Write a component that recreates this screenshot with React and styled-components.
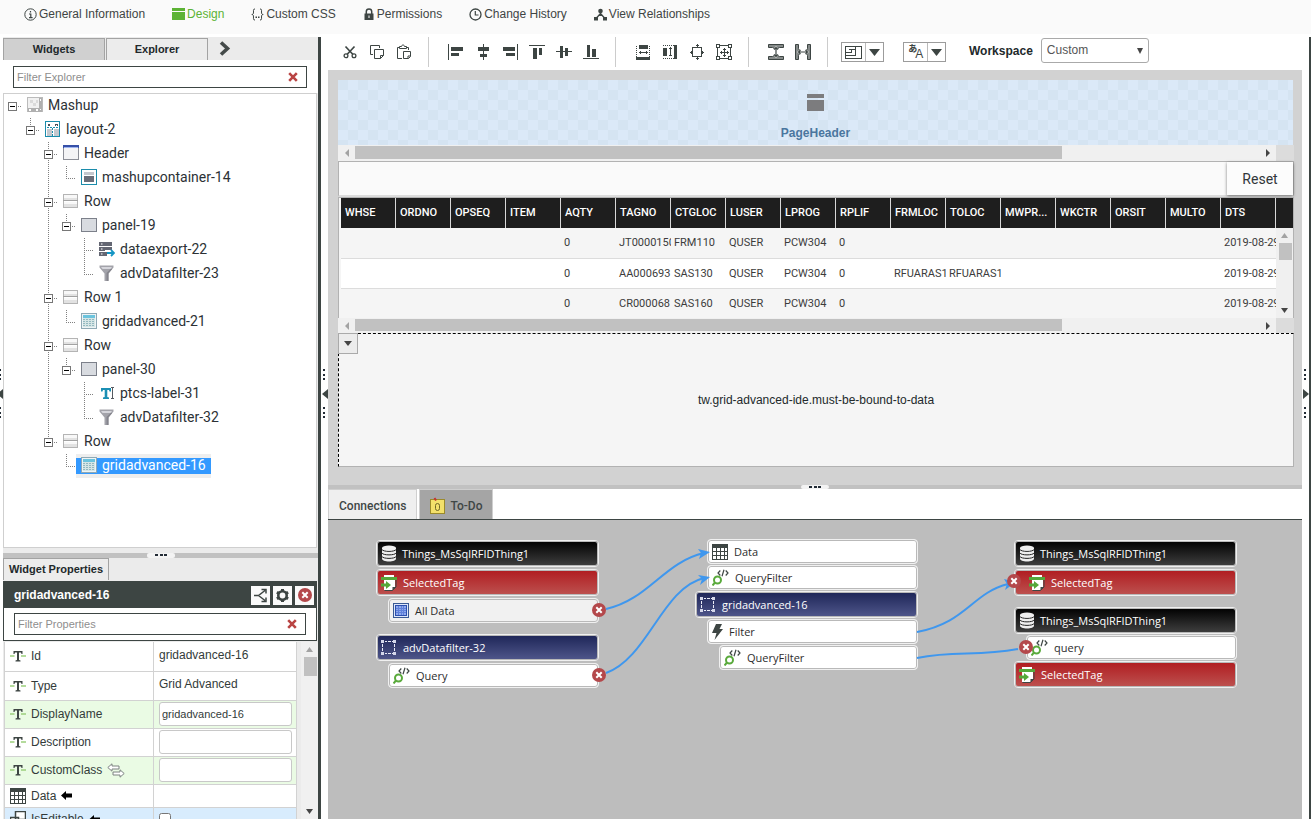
import React from "react";
import styled, { createGlobalStyle, css } from "styled-components";

const ink = "#3d4543";
const sans = '"Liberation Sans", Arial, sans-serif';
const roboto = 'Roboto, "Liberation Sans", sans-serif';
const open = '"Open Sans", "Noto Sans", sans-serif';

const GlobalStyle = createGlobalStyle`
  *, *::before, *::after { box-sizing: border-box; }
  body { margin: 0; background: #fff; color: #333b3a; font: 12px/16px ${sans}; }
  button, input, select { font: inherit; color: inherit; margin: 0; }
  button { padding: 0; border: 0; background: none; cursor: pointer; }
  svg { display: block; flex: none; }
`;

/* ---------- shell ---------- */

const Page = styled.div`
  display: flex;
  flex-direction: column;
  height: 100vh;
  min-height: 700px;
  padding-bottom: 3px;
  overflow: hidden;
`;

const Nav = styled.nav`
  display: flex;
  gap: 27px;
  height: 34px;
  flex: none;
  margin-bottom: 3px;
  padding: 0 24px 6px;
  align-items: center;
  background: #fafafa;
`;

const NavLink = styled.a`
  display: flex;
  align-items: center;
  gap: 2px;
  color: ${(p) => (p.$active ? "#5cb335" : "#3f4544")};
  text-decoration: none;
  white-space: nowrap;
`;

const Body = styled.div`
  display: flex;
  flex: 1;
  min-height: 0;
`;

const Gutter = styled.div`
  display: flex;
  flex: none;
  flex-direction: column;
  align-items: ${(p) => p.$align || "center"};
  width: ${(p) => p.$width}px;
  padding-top: 332px;
  overflow: hidden;
`;

const Bar = styled.div`
  flex: none;
  width: ${(p) => p.$width}px;
  background: ${ink};
`;

const Left = styled.aside`
  display: flex;
  flex-direction: column;
  flex: none;
  width: 315px;
  background: #ebebeb;
`;

const Main = styled.main`
  display: flex;
  flex-direction: column;
  flex: 1;
  min-width: 0;
`;

/* ---------- left panel ---------- */

const TabRow = styled.div`
  display: flex;
  flex: none;
  align-items: flex-end;
  gap: 1px;
  height: ${(p) => p.$height}px;
`;

const Tab = styled.button`
  width: ${(p) => p.$width}px;
  height: 22px;
  padding-bottom: 2px;
  border: 1px solid #a3a3a3;
  border-bottom: 0;
  background: ${(p) => (p.$shaded ? "#d0d0d0" : "#ececec")};
  color: #22292b;
  font-size: 11px;
  font-weight: bold;
  white-space: nowrap;
`;

const MoreTabs = styled.button`
  display: grid;
  place-items: center;
  width: 32px;
  height: 24px;
`;

const FilterRow = styled.label`
  display: flex;
  flex: none;
  padding: ${(p) => p.$pad};
  background: #fff;
`;

const FilterBox = styled.span`
  display: flex;
  align-items: center;
  flex: 1;
  height: 22px;
  padding: 0 8px 0 3px;
  border: 1px solid ${ink};
`;

const FilterInput = styled.input`
  flex: 1;
  min-width: 0;
  padding: 0;
  border: 0;
  outline: 0;
  background: none;
  font-size: 11px;
  &::placeholder { color: #8e8e8e; opacity: 1; }
`;

const Tree = styled.ul`
  flex: 1;
  min-height: 0;
  margin: 0 1px 5px 0;
  padding: 0;
  border: 1px solid #cfcfcf;
  background: #fff;
  list-style: none;
  overflow: hidden;
  font-family: ${roboto};
  font-size: 14px;
`;

const TreeRow = styled.li`
  display: flex;
  height: 24px;
`;

const Toggle = styled.button`
  width: 18px;
  height: 24px;
`;

const TreeLabel = styled.a`
  display: flex;
  align-items: center;
  gap: 5px;
  padding: 0 5px 2px;
  color: #2c3135;
  line-height: 22px;
  text-decoration: none;
  white-space: nowrap;
  ${(p) =>
    p.$selected &&
    css`
      color: #fff;
      background: linear-gradient(#eee 4px, #3399ff 4px, #3399ff 20px, #eee 20px);
    `}
`;

const Splitter = styled.div`
  display: flex;
  justify-content: center;
  align-items: center;
  flex: none;
  height: ${(p) => p.$height}px;
  background: #c1c1c1;
`;

const SplitGrip = styled.span`
  display: grid;
  place-items: center;
  width: 28px;
  height: 100%;
  border-radius: 2px;
  background: #f3f3f3;
`;

const Props = styled.section`
  display: flex;
  flex-direction: column;
  flex: none;
  height: 261px;
`;

const PropsHead = styled.div`
  flex: none;
  margin: 1px 1px 1px 0;
  border: 1px solid ${ink};
`;

const PropsTitle = styled.h2`
  display: flex;
  align-items: center;
  gap: 3px;
  height: 26px;
  margin: 0;
  padding: 0 2px 0 10px;
  background: ${ink};
  color: #fff;
  font-size: 12px;
`;

const PropsName = styled.span`
  flex: 1;
`;

const SquareButton = styled.button`
  display: grid;
  place-items: center;
  width: 19px;
  height: 19px;
  background: #fafafa;
`;

const PropsBody = styled.div`
  display: flex;
  flex: 1;
  gap: 4px;
  min-height: 0;
  padding-left: 1px;
  overflow: hidden;
`;

const PropTable = styled.table`
  flex: none;
  align-self: flex-start;
  width: 293px;
  border-collapse: collapse;
  table-layout: fixed;
`;

const PropRow = styled.tr`
  height: ${(p) => p.$height}px;
  background: ${(p) => p.$tint || "#fff"};
`;

const PropCell = styled.td`
  padding: 0 4px 0 5px;
  border: 1px solid #d2d2d2;
  border-width: 0 1px 1px;
  vertical-align: middle;
  text-align: left;
`;

const PropName = styled.span`
  display: flex;
  align-items: center;
  gap: 5px;
  font-weight: normal;
`;

const PropText = styled.span`
  display: block;
  padding-bottom: 3px;
`;

const PropInput = styled.input`
  display: block;
  width: 100%;
  height: 24px;
  padding: 0 2px;
  border: 1px solid #c8c8c8;
  border-radius: 3px;
  background: #fff;
  font-size: 11px;
`;

const PropCheck = styled.input`
  display: block;
  width: 12px;
  height: 12px;
`;

/* ---------- scroll bars ---------- */

const HTrack = styled.div`
  display: flex;
  align-items: stretch;
  flex: none;
  height: ${(p) => p.$height}px;
  padding-right: 18px;
  background: linear-gradient(#dcdcdc, #dcdcdc) right / 18px 100% no-repeat #f0f0f0;
`;

const ScrollButton = styled.button`
  display: grid;
  place-items: center;
  flex: none;
  width: 17px;
  height: 15px;
`;

const HThumb = styled.div`
  flex: 707;
  margin: 1px 0 2px;
  background: #c1c1c1;
`;

const HRest = styled.div`
  flex: 197;
`;

const VTrack = styled.div`
  display: flex;
  flex-direction: column;
  flex: ${(p) => p.$flex || "none"};
  width: 17px;
  background: #f0f0f0;
`;

const VThumb = styled.div`
  height: ${(p) => p.$height}px;
  margin: 0 1px 0 3px;
  background: #c1c1c1;
`;

const Spacer = styled.div`
  flex: 1;
`;

/* ---------- toolbar ---------- */

const Toolbar = styled.div`
  display: flex;
  align-items: center;
  flex: none;
  height: 33px;
  padding: 0 8px 3px;
`;

const ToolButton = styled.button`
  display: grid;
  place-items: center;
  flex: none;
  width: 27px;
  height: 28px;
`;

const Separator = styled.span`
  flex: none;
  width: 1px;
  height: 30px;
  margin: 0 13px 0 11px;
  background: #ccc;
`;

const SplitButton = styled.button`
  display: flex;
  align-items: center;
  flex: none;
  width: 43px;
  height: 20px;
  margin-right: 19px;
  border: 1px solid #9c9c9c;
`;

const SplitCell = styled.span`
  display: grid;
  place-items: center;
  flex: ${(p) => p.$grow};
  height: 100%;
  border-left: ${(p) => (p.$line ? "1px solid #bbb" : "0")};
`;

const WorkspaceLabel = styled.label`
  display: flex;
  align-items: center;
  gap: 8px;
  margin: 0 0 3px 4px;
  color: #22292b;
  font-weight: bold;
`;

const SelectWrap = styled.span`
  display: grid;
  align-items: center;
  width: 108px;
  height: 25px;
  & > * { grid-area: 1 / 1; }
  & > svg { justify-self: end; margin-right: 6px; pointer-events: none; }
`;

const Select = styled.select`
  width: 100%;
  height: 100%;
  padding: 0 5px 2px;
  border: 1px solid #aaa;
  border-radius: 3px;
  appearance: none;
  background: #fff;
  color: #555;
  font-weight: normal;
`;

/* ---------- design canvas ---------- */

const Canvas = styled.section`
  display: flex;
  flex-direction: column;
  flex: 1;
  min-height: 0;
  padding: 10px 8px 18px 10px;
  background: #d2d2d2;
`;

const HeaderWidget = styled.div`
  display: flex;
  flex-direction: column;
  align-items: center;
  flex: none;
  height: 65px;
  margin-right: 1px;
  padding-top: 14px;
  gap: 14px;
  background: conic-gradient(#dbe9f8 25%, #d5e4f2 0 50%, #dbe9f8 0 75%, #d5e4f2 0) 0 0 / 20px 20px;
  color: #4a769f;
  font-weight: bold;
`;

const ResetPanel = styled.div`
  display: flex;
  justify-content: flex-end;
  flex: none;
  height: 36px;
  border: 1px solid #b2b2b2;
  border-width: 1px 1px 2px 1px;
  border-bottom-color: #dcdcdc;
  background: #fafafa;
`;

const ResetButton = styled.button`
  width: 66px;
  height: 33px;
  background: #fcfcfc;
  box-shadow: 0 1px 3px rgba(0, 0, 0, 0.5);
  color: #32373a;
  font-family: ${roboto};
  font-size: 14px;
`;

const GridWidget = styled.div`
  display: flex;
  flex: none;
  height: 121px;
  border: 1px solid #b2b2b2;
  border-width: 1px 1px 0;
  padding-left: 2px;
  background: #f5f5f5;
  overflow: hidden;
`;

const DataTable = styled.table`
  flex: 1;
  width: 100%;
  min-width: 0;
  align-self: flex-start;
  border-collapse: separate;
  border-spacing: 0;
  table-layout: fixed;
  font-family: ${roboto};
  font-size: 11px;
`;

const HeadCell = styled.th`
  height: 30px;
  padding: 0 0 0 4px;
  border-right: 1px solid #d8d8d8;
  background: #1e1e1e;
  color: #fff;
  font-weight: 500;
  text-align: left;
  white-space: nowrap;
  overflow: hidden;
`;

const DataRow = styled.tr`
  background: ${(p) => (p.$even ? "#fff" : "#f5f5f5")};
  &:first-child td { height: 31px; }
`;

const DataCell = styled.td`
  height: 30px;
  padding: 0 0 0 3px;
  border-bottom: 1px solid #dcdcdc;
  color: #3c3c3c;
  white-space: nowrap;
  overflow: hidden;
`;

const GridSide = styled.div`
  display: flex;
  flex-direction: column;
  flex: none;
  width: 17px;
`;

const GridSideHead = styled.div`
  height: 30px;
  background: #1e1e1e;
`;

const BoundNotice = styled.div`
  position: relative;
  display: flex;
  align-items: center;
  justify-content: center;
  flex: 1;
  min-height: 60px;
  border: 1px dashed #000;
  border-right: 1px solid #b2b2b2;
  border-bottom: 1px solid #b2b2b2;
  background: #f5f5f5;
  color: #22292b;
`;

const WidgetMenu = styled.button`
  position: absolute;
  top: -1px;
  left: -1px;
  display: grid;
  place-items: center;
  width: 20px;
  height: 21px;
  border: 1px solid #aaa;
  background: #ececec;
`;

/* ---------- connections ---------- */

const BottomTabs = styled.div`
  display: flex;
  flex: none;
  gap: 2px;
  height: 31px;
  border-bottom: 1px solid ${ink};
`;

const BottomTab = styled.button`
  display: flex;
  align-items: center;
  gap: 4px;
  padding: 2px 10px 0;
  border: 1px solid #cfcfcf;
  border-bottom: 0;
  background: ${(p) => (p.$shaded ? "#a5a5a5" : "#efefef")};
  color: #3f4746;
  font-family: ${roboto};
  font-weight: 500;
`;

const Diagram = styled.section`
  position: relative;
  flex: none;
  height: 299px;
  background: #bdbdbd;
  overflow: hidden;
`;

const Wires = styled.svg`
  position: absolute;
  top: 0;
  left: 0;
`;

const Stack = styled.div`
  position: absolute;
  top: ${(p) => p.$top}px;
  left: ${(p) => p.$left}px;
  display: flex;
  flex-direction: column;
  gap: ${(p) => p.$gap || 2}px;
  width: 223px;
`;

const fills = {
  thing: "linear-gradient(#000, #404040)",
  event: "linear-gradient(#b01c20, #bd5250)",
  widget: "linear-gradient(#1d2557, #50578b)",
  plain: "#fff",
  muted: "#f1f1f1",
};

const Node = styled.div`
  position: relative;
  display: flex;
  align-items: center;
  gap: ${(p) => (p.$kind === "thing" ? 5 : 6)}px;
  height: ${(p) => (p.$kind === "plain" || p.$kind === "muted" ? 25 : 27)}px;
  margin-left: ${(p) => (p.$indent || 0) * 12}px;
  padding-left: ${(p) => (p.$pad ? 14 : 4)}px;
  border: 1px solid #f0f0f0;
  border-radius: 4px;
  background: ${(p) => fills[p.$kind]};
  box-shadow: inset 0 0 0 1px #b9b9b9;
  color: ${(p) => (p.$kind === "plain" || p.$kind === "muted" ? "#2d2d2d" : "#fff")};
  font-family: ${open};
  font-size: 11px;
  white-space: nowrap;
`;

const Unlink = styled.button`
  position: absolute;
  top: 4px;
  ${(p) => (p.$side === "left" ? "left: -8px;" : "right: -8px;")}
  width: 14px;
  height: 14px;
`;

/* ---------- icons ---------- */

const Svg = ({ w = 16, h = 16, crisp, children, ...rest }) => (
  <svg
    width={w}
    height={h}
    viewBox={`0 0 ${w} ${h}`}
    fill="none"
    shapeRendering={crisp ? "crispEdges" : "auto"}
    aria-hidden="true"
    {...rest}
  >
    {children}
  </svg>
);

const Tri = ({ dir, w = 7, h = 5, color = "#454545" }) => {
  const d = {
    down: `M0 0H${w}L${w / 2} ${h}Z`,
    up: `M0 ${h}H${w}L${w / 2} 0Z`,
    left: `M${w} 0V${h}L0 ${h / 2}Z`,
    right: `M0 0V${h}L${w} ${h / 2}Z`,
  }[dir];
  return (
    <Svg w={w} h={h}>
      <path d={d} fill={color} />
    </Svg>
  );
};

const InfoIcon = () => (
  <Svg w={13} h={13}>
    <circle cx="6.5" cy="6.5" r="5.7" stroke={ink} />
    <path d="M6.5 3v1.5M5 6h1.8v3.5M5 9.7h3.6" stroke={ink} strokeWidth="1.2" />
  </Svg>
);
const DesignIcon = () => (
  <Svg w={13} h={12} crisp>
    <path d="M0 0h13v3H0zM0 4h13v8H0z" fill="#5cb335" />
  </Svg>
);
const BracesIcon = () => (
  <Svg w={13} h={13}>
    <path d="M4 1C2 1 2.500 2 2.500 4S2 6.500.8 6.500C2 6.500 2.500 7 2.500 9S2 12 4 12M9 1c2 0 1.500 1 1.500 3s.5 2.500 1.700 2.500c-1.200 0-1.700.5-1.700 2.500s.5 3-1.500 3" stroke={ink} />
    <path d="M4.500 8.500h1.500V10H4.500zM7 8.500h1.500V10H7z" fill={ink} />
  </Svg>
);
const LockIcon = () => (
  <Svg w={12} h={12}>
    <path d="M3.300 6V3.600a2.700 2.700 0 0 1 5.400 0V6" stroke={ink} strokeWidth="1.500" />
    <path d="M1.500 5.500h9V12h-9z" fill={ink} />
    <path d="M5.500 7.500h1v2.500h-1z" fill="#fff" />
  </Svg>
);
const ClockIcon = () => (
  <Svg w={13} h={13}>
    <circle cx="6.500" cy="6.500" r="5.500" stroke={ink} strokeWidth="1.300" />
    <path d="M6.300 3v4H9.500" stroke={ink} strokeWidth="1.200" />
  </Svg>
);
const RelationsIcon = () => (
  <Svg w={13} h={13}>
    <path d="M6.500 4v4M6.500 5.500 2.500 10M6.500 5.500l4 4.500" stroke={ink} strokeWidth="1.300" />
    <path d="M0 9h4v3.500H0zM9 9h4v3.500H9z" fill={ink} />
    <circle cx="6.500" cy="3" r="2.300" fill={ink} />
  </Svg>
);
const ChevronIcon = () => (
  <Svg w={12} h={15}>
    <path d="m2 1.500 6.500 6L2 13.500" stroke="#454b4a" strokeWidth="3.600" />
  </Svg>
);
const ClearIcon = () => (
  <Svg w={10} h={10}>
    <path d="m1.200 1.200 7.600 7.600M8.800 1.200 1.200 8.800" stroke="#b94443" strokeWidth="2.600" />
  </Svg>
);
const Dots = ({ vertical }) => (
  <Svg w={vertical ? 3 : 12} h={vertical ? 12 : 3} crisp>
    {[0, 5, 9].map((n) => (
      <rect key={n} x={vertical ? 0 : n} y={vertical ? n : 0} width={vertical ? 2 : 3} height="2" fill="#222b35" />
    ))}
  </Svg>
);

const GripStack = styled.div`
  display: flex;
  flex-direction: column;
  align-items: center;
  gap: 8px;
`;
const Grip = ({ dir }) => (
  <GripStack>
    <Dots vertical />
    <Tri dir={dir} w={6} h={10} color={ink} />
    <Dots vertical />
  </GripStack>
);

/* tree icons */
const treeIcons = {
  mashup: (
    <Svg crisp>
      <rect x=".5" y=".5" width="15" height="14" fill="#f1f1f1" stroke="#bbb" />
      <path d="M1 11h14v4H1zM12 1h3v13h-3z" fill="#b0b0b0" />
      <path d="M3 3h3v3H3zM6 6h3v3H6zM9 3h2v3H9z" fill="#dadada" />
      <path d="M2 12h2v2H2zM9 12h2v2H9zM13 2h1v2h-1zM13 12h1v1h-1z" fill="#fff" />
    </Svg>
  ),
  layout: (
    <Svg crisp>
      <rect x=".5" y=".5" width="14" height="15" fill="#fff" stroke="#1b8cab" />
      <path d="M2 8h5v7H2zM9 8h5v7H9z" fill="#c5c8ce" />
      <path d="M2 6.500h12" stroke="#1b8cab" strokeDasharray="2 1" />
      <path d="M7.500 7v8" stroke="#1b8cab" strokeDasharray="2 1" />
      <path d="M3 5V3h2M10 3h2v2M4 4l1 1M11 4l-1 1" stroke="#4b5058" />
    </Svg>
  ),
  header: (
    <Svg crisp>
      <rect x=".5" y=".5" width="15" height="14" fill="#f4f4f6" stroke="#8d8f98" />
      <path d="M0 0h16v3H0z" fill="#3650a8" />
      <path d="M1 2h14v1H1z" fill="#9fb5f0" />
    </Svg>
  ),
  container: (
    <Svg crisp>
      <rect x=".5" y=".5" width="15" height="15" fill="#fff" stroke="#1b8cab" />
      <path d="M3 3h10v3H3z" fill="#c5c8ce" />
      <path d="M3 7h10v6H3z" fill="#6b6e79" />
    </Svg>
  ),
  row: (
    <Svg crisp>
      <path d="M0 1h15v14H0z" fill="#b4b4b4" />
      <path d="M1 2h13v3H1zM1 9h13v2H1z" fill="#f8f8f8" />
      <path d="M1 5h13v2H1zM1 11h13v3H1z" fill="#e2e2e2" />
      <path d="M0 7h15v1H0z" fill="#a2a2a2" />
      <path d="M1 8h13v1H1z" fill="#fff" />
    </Svg>
  ),
  panel: (
    <Svg crisp>
      <rect x=".5" y="1.500" width="15" height="13" fill="#d8dbe0" stroke="#7c808a" />
    </Svg>
  ),
  dataexport: (
    <Svg>
      <path d="M0 1h13v4H0zM0 6h13v3H6v1H0zM0 11h8v4H0z" fill="#646773" />
      <path d="M2 2.500h1.500v1H2zM2 7.500h1.500v1H2zM2 12.500h1.500v1H2z" fill="#fff" />
      <path d="M8 12h7M12 9l3 3-3 3" stroke="#1495c4" strokeWidth="1.800" />
    </Svg>
  ),
  funnel: (
    <Svg>
      <path d="M.5.500h14V2.500L9.500 8.500V16h-4V8.500L.5 2.500Z" fill="#a3a3aa" />
      <path d="M2 2h11L11.500 4h-8Z" fill="#d6d6dc" />
      <path d="M9.500 8.500V16H7.500V8l4-4h1.700z" fill="#85858d" />
    </Svg>
  ),
  grid: (
    <Svg crisp>
      <rect x=".5" y=".5" width="15" height="15" fill="#eef4f6" stroke="#8fa9b5" />
      <path d="M2 2h12v3H2z" fill="#6cc4de" />
      <path d="M2 5h12v9H2z" fill="#d6e6e6" />
      <path d="M2 6.500h12M2 8.500h12M2 10.500h12M2 12.500h12" stroke="#93b8c0" strokeDasharray="2 1" />
    </Svg>
  ),
  label: (
    <Svg>
      <path d="M2 3h10v3.500h-1.500L10 5H8.300v7l1.700.5V14H4v-1.500l1.700-.5V5H4l-.5 1.500H2Z" fill="#1b8fb4" />
      <path d="M12 2.500h3M13.500 3v10M12 13.500h3" stroke="#555a60" />
    </Svg>
  ),
};

/* property icons */
const StringIcon = () => (
  <Svg w={16} h={14}>
    <path d="M0 7h4.500M11 7h5" stroke="#9ccf7c" strokeWidth="1.500" />
    <path d="M3.500 2h9v3h-1L11 3.500H9V11l1.500.5v1h-5v-1L7 11V3.500H5L4.500 5h-1Z" fill={ink} />
  </Svg>
);
const TableIcon = () => (
  <Svg crisp>
    <rect x=".5" y=".5" width="15" height="15" fill="#fff" stroke={ink} />
    <path d="M0 0h16v4H0z" fill={ink} />
    <path d="M0 7.500h16M0 11.500h16M4.500 4v12M8.500 4v12M12.500 4v12" stroke={ink} />
  </Svg>
);
const BoolIcon = () => (
  <Svg>
    <path d="M5.500.5h10v8h-10zM.5 6.500h8v8h-8z" fill="#fff" stroke={ink} strokeWidth="1.500" />
  </Svg>
);
const SwapIcon = () => (
  <Svg w={18} h={15}>
    <path d="M.8 4.500 5 .8V3h7v3H5v2.200ZM17.200 10.500 13 6.800V9H6v3h7v2.200Z" fill="#fff" stroke="#7c8280" />
  </Svg>
);
const BackIcon = () => (
  <Svg w={12} h={9}>
    <path d="M0 4.500 5 0v2.500h6v4H5V9Z" fill="#000" />
  </Svg>
);
const BranchIcon = () => (
  <Svg w={15} h={15}>
    <path d="M1 7.500h4.500L12 2.500M5.500 7.500 12 12.500M8.500 1.500H13v4M8.500 13.500H13v-4" stroke={ink} strokeWidth="1.500" />
  </Svg>
);
const GearIcon = () => (
  <Svg w={15} h={15}>
    <circle cx="7.500" cy="7.500" r="4.200" stroke={ink} strokeWidth="2.600" />
    <path d="M7.500 1v2M7.500 12v2M1.900 4.200l1.700 1M11.400 9.800l1.700 1M1.900 10.800l1.700-1M11.400 5.200l1.700-1" stroke={ink} strokeWidth="3" />
  </Svg>
);
const CloseIcon = () => (
  <Svg w={14} h={14}>
    <circle cx="7" cy="7" r="7" fill="#b4484b" />
    <path d="m4.300 4.300 5.400 5.400M9.700 4.300 4.300 9.700" stroke="#fff" strokeWidth="2" />
  </Svg>
);

/* toolbar icons */
const F = ({ d }) => <path d={d} fill={ink} />;
const L = ({ d, ...r }) => <path d={d} stroke={ink} {...r} />;
const tools = [
  [
    ["Cut", <Svg key="i" w={14} h={14}><L d="M2.500 1.500 10 9.500M11.500 1.500 4 9.500" strokeWidth="1.700" /><circle cx="3" cy="10.800" r="1.900" stroke={ink} strokeWidth="1.300" /><circle cx="11" cy="10.800" r="1.900" stroke={ink} strokeWidth="1.300" /></Svg>],
    ["Copy", <Svg key="i"><L d="M4 10.500H1.500v-9h9V4" /><L d="M5.500 5.500h9v6l-3 3h-6Z" /><L d="M11.500 14.500v-3h3" /></Svg>],
    ["Paste", <Svg key="i"><L d="M6 14.500H1.500v-11h2M10.500 3.500h2V6" /><L d="M3.500 4.500h7v-2h-2c0-2-3-2-3 0h-2Z" /><L d="M7.500 7.500h7v5l-2 2h-5Z" /><L d="M12 14.500v-2.500h2.500" /></Svg>],
  ],
  [
    ["Align left", <Svg key="i" crisp><F d="M0 0h1v16H0zM3 3h12v4H3zM3 9h8v3H3z" /></Svg>],
    ["Align center", <Svg key="i" crisp><F d="M8 0h1v16H8zM3 3h11v4H3zM5 10h7v3H5z" /></Svg>],
    ["Align right", <Svg key="i" crisp><F d="M15 0h1v16h-1zM1 3h12v4H1zM4 9h9v3H4z" /></Svg>],
    ["Align top", <Svg key="i" crisp><F d="M0 1h16v1H0zM4 4h4v11H4zM10 4h3v7h-3z" /></Svg>],
    ["Align middle", <Svg key="i" crisp><F d="M0 7h16v1H0zM4 2h3v12H4zM9 4h3v8H9z" /></Svg>],
    ["Align bottom", <Svg key="i" crisp><F d="M0 14h16v1H0zM4 1h3v12H4zM9 5h4v8H9z" /></Svg>],
  ],
  [
    ["Same width", <Svg key="i" crisp><F d="M4 1h9v4H4zM1 13h14v3H1z" /><L d="M1.500 2v11M14.500 2v11" strokeDasharray="1 1" /><L d="M4 8.500h9M5.500 7v3M11.500 7v3" /></Svg>],
    ["Same height", <Svg key="i" crisp><F d="M1 4h4v8H1zM12 1h3v14h-3z" /><L d="M1 1.500h11M1 14.500h11" strokeDasharray="1 1" /><L d="M8.500 3v9M7 4.500h3M7 11.500h3" /></Svg>],
    ["Fit", <Svg key="i" crisp><L d="M3.500 3.500h9v9h-9z" /><L d="M8.500 0v4M8.500 12v4M1 8.500h3M12 8.500h3M7 1.500h3M7 14.500h3M2.500 7v3M13.500 7v3" /></Svg>],
    ["Expand", <Svg key="i" crisp><L d="M1.500 1.500h13v13h-13z" strokeWidth="1" /><F d="M0 0h4v4H0zM12 0h4v4h-4zM0 12h4v4H0zM12 12h4v4h-4z" /><path d="M1 1h2v2H1zM13 1h2v2h-2zM1 13h2v2H1zM13 13h2v2h-2z" fill="#fff" /><L d="M8.500 4v9M4 8.500h9M7 5.500h3M7 11.500h3M5.500 7v3M11.500 7v3" /></Svg>],
  ],
  [
    ["Space vertically", <Svg key="i"><path d="M.5.500h15v3h-4l-3.500 2-3.500-2h-4zM.5 15.500h15v-3h-4l-3.500-2-3.500 2h-4z" fill="#858a89" stroke={ink} /><path d="M5 6 8 2l3 4ZM5 10l3 4 3-4Z" fill="#fff" /><L d="M8 3v10M6 5.500l2-2 2 2M6 10.500l2 2 2-2" strokeWidth="1.200" /></Svg>],
    ["Space horizontally", <Svg key="i"><path d="M.5.500v15h3v-4l2-3.500-2-3.500v-4zM15.500.500v15h-3v-4l-2-3.500 2-3.500v-4z" fill="#858a89" stroke={ink} /><path d="M6 5 2 8l4 3ZM10 5l4 3-4 3Z" fill="#fff" /><L d="M3 8h10M5.500 6l-2 2 2 2M10.500 6l2 2-2 2" strokeWidth="1.200" /></Svg>],
  ],
];

const LayoutIcon = () => (
  <Svg w={17} h={13} crisp>
    <L d="M.5.500h16v12H.5zM4 3.500h6v6H.5M.5 6.500h6v-3M10.500.500v9" />
  </Svg>
);
const Translate = styled.span`
  display: flex;
  align-items: flex-start;
  height: 16px;
  color: ${ink};
  font: bold 9px/10px "Noto Sans CJK JP", ${sans};
`;
const TranslateA = styled.span`
  margin-left: -2px;
  padding-top: 4px;
  font: 12px/12px ${sans};
`;

const HeaderIcon = () => (
  <Svg w={17} h={17} crisp>
    <path d="M0 0h17v4H0zM0 6h17v11H0z" fill="#7c7c7e" />
  </Svg>
);
const NoteIcon = () => (
  <Svg w={16} h={18}>
    <rect x=".5" y="2.500" width="14" height="14" fill="#f3e06b" stroke="#9b8a2a" />
    <rect x="5.500" y="6.500" width="4" height="7" rx="2" stroke="#6f6626" />
    <path d="m4.500 1 1.500 2.500" stroke="#c43131" strokeWidth="2" />
  </Svg>
);

/* node icons */
const nodeIcons = {
  db: (
    <Svg w={16} h={17}>
      <path d="M1 3v10.500C1 15.500 4 16.500 8 16.500s7-1 7-3V3Z" fill="#eee" />
      <path d="M1 4.500c1 2.500 13 2.500 14 0M1 8c1 2.500 13 2.500 14 0M1 11.500c1 2.500 13 2.500 14 0" stroke="#222" />
      <ellipse cx="8" cy="3" rx="7" ry="2.500" fill="#eee" />
    </Svg>
  ),
  event: (
    <Svg>
      <path d="M3 0h10v2H3zM3 5h11v7l-3 3H3z" fill="#fff" />
      <path d="M15 5v7l-3.500 3.500H3.500" stroke={ink} />
      <path d="M11.500 15v-3H15Z" fill={ink} />
      <path d="M0 2h16v3H0z" fill="#55a83a" />
      <path d="M0 8.500h5V6l5 4-5 4v-2.500H0z" fill="#55a83a" />
    </Svg>
  ),
  all: (
    <Svg crisp>
      <rect x=".5" y=".5" width="15" height="14" fill="#dfe8fa" stroke="#3a5a94" />
      <rect x="2.500" y="2.500" width="11" height="10" fill="#8fa9ec" stroke="#2b4fae" />
      <path d="M3 5.500h10M3 7.500h10M3 9.500h10M5.500 3v9M8.500 3v9M10.500 3v9" stroke="#4167cf" strokeWidth="1" opacity=".6" />
    </Svg>
  ),
  widget: (
    <Svg w={16} h={15} crisp>
      <path d="M4 1.500h2M7 1.500h3M11 1.500h1M4 13.500h2M7 13.500h3M11 13.500h1M1.500 4v3M1.500 8v3M13.500 4v3M13.500 8v3" stroke="#e9ebf6" />
      <path d="M0 0h3v3H0zM12 0h3v3h-3zM0 12h3v3H0zM12 12h3v3h-3z" fill="#d4d7ea" />
    </Svg>
  ),
  query: (
    <Svg w={17} h={17}>
      <circle cx="5.500" cy="11" r="3.500" stroke="#5aaa3c" strokeWidth="2" />
      <path d="M3 13.500.5 16.500" stroke="#5aaa3c" strokeWidth="2" />
      <path d="M8.300 1.500 6 4l2.300 2.500M13.700 1.500 16 4l-2.300 2.500M12 .8 10 7.200" stroke={ink} strokeWidth="1.200" />
    </Svg>
  ),
  table: <TableIcon />,
  bolt: (
    <Svg w={11} h={16}>
      <path d="M4 0h6L7.500 5H11L2.500 16 4.500 9H0Z" fill={ink} />
    </Svg>
  ),
};

/* ---------- data ---------- */

const navItems = [
  ["General Information", <InfoIcon key="i" />],
  ["Design", <DesignIcon key="i" />, true],
  ["Custom CSS", <BracesIcon key="i" />],
  ["Permissions", <LockIcon key="i" />],
  ["Change History", <ClockIcon key="i" />],
  ["View Relationships", <RelationsIcon key="i" />],
];

/* guides: one letter per level. space = empty, | = line, + = open node, r = root node, e = last open node, t = branch, l = last leaf */
const treeItems = [
  ["r", "mashup", "Mashup"],
  [" e", "layout", "layout-2"],
  ["  +", "header", "Header"],
  ["  |l", "container", "mashupcontainer-14"],
  ["  +", "row", "Row"],
  ["  |e", "panel", "panel-19"],
  ["  | t", "dataexport", "dataexport-22"],
  ["  | l", "funnel", "advDatafilter-23"],
  ["  +", "row", "Row 1"],
  ["  |l", "grid", "gridadvanced-21"],
  ["  +", "row", "Row"],
  ["  |e", "panel", "panel-30"],
  ["  | t", "label", "ptcs-label-31"],
  ["  | l", "funnel", "advDatafilter-32"],
  ["  e", "row", "Row"],
  ["   l", "grid", "gridadvanced-16", true],
];

const columns = ["WHSE", "ORDNO", "OPSEQ", "ITEM", "AQTY", "TAGNO", "CTGLOC", "LUSER", "LPROG", "RPLIF", "FRMLOC", "TOLOC", "MWPR...", "WKCTR", "ORSIT", "MULTO", "DTS"];
const rows = [
  { AQTY: "0", TAGNO: "JT0000150", CTGLOC: "FRM110", LUSER: "QUSER", LPROG: "PCW304", RPLIF: "0", DTS: "2019-08-29" },
  { AQTY: "0", TAGNO: "AA000693", CTGLOC: "SAS130", LUSER: "QUSER", LPROG: "PCW304", RPLIF: "0", FRMLOC: "RFUARAS1", TOLOC: "RFUARAS1", DTS: "2019-08-29" },
  { AQTY: "0", TAGNO: "CR000068", CTGLOC: "SAS160", LUSER: "QUSER", LPROG: "PCW304", RPLIF: "0", DTS: "2019-08-29" },
];

/* ---------- parts ---------- */

const Guide = ({ kind, label }) => {
  const up = "|+etl".includes(kind);
  const down = "|+t".includes(kind);
  const across = "r+etl".includes(kind);
  const box = "r+e".includes(kind);
  const drawing = (
    <Svg w={18} h={24} crisp>
      {up && <path d="M8.500 0V12" stroke="#808080" strokeDasharray="1 1" />}
      {down && <path d="M8.500 12V24" stroke="#808080" strokeDasharray="1 1" />}
      {across && <path d="M8 12.500H18" stroke="#808080" strokeDasharray="1 1" />}
      {box && <rect x="4.500" y="8.500" width="8" height="8" fill="#fff" stroke="#777" />}
      {box && <path d="M6 12.500h5" stroke="#000" />}
    </Svg>
  );
  return box ? <Toggle aria-label={`Collapse ${label}`}>{drawing}</Toggle> : drawing;
};

const HScroll = ({ height }) => (
  <HTrack $height={height}>
    <ScrollButton aria-label="Scroll left"><Tri dir="left" w={4} h={8} color="#a3a3a3" /></ScrollButton>
    <HThumb />
    <HRest />
    <ScrollButton aria-label="Scroll right"><Tri dir="right" w={4} h={8} /></ScrollButton>
  </HTrack>
);

const Prop = ({ name, height, tint, icon, extra, children }) => (
  <PropRow $height={height} $tint={tint}>
    <PropCell as="th" scope="row">
      <PropName>{icon || <StringIcon />}{name}{extra}</PropName>
    </PropCell>
    <PropCell>{children}</PropCell>
  </PropRow>
);

const ThingNode = () => <Node $kind="thing">{nodeIcons.db}Things_MsSqlRFIDThing1</Node>;

const Cut = ({ side }) => (
  <Unlink $side={side} aria-label="Remove connection"><CloseIcon /></Unlink>
);

const Connections = () => (
  <Diagram>
    <Stack $left={48} $top={20}>
      <ThingNode />
      <Node $kind="event">{nodeIcons.event}SelectedTag</Node>
      <Node $kind="muted" $indent={1}>{nodeIcons.all}All Data<Cut /></Node>
    </Stack>
    <Stack $left={48} $top={114}>
      <Node $kind="widget">{nodeIcons.widget}advDatafilter-32</Node>
      <Node $kind="plain" $indent={1}>{nodeIcons.query}Query<Cut /></Node>
    </Stack>
    <Stack $left={367} $top={19} $gap={1}>
      <Node $kind="plain" $indent={1}>{nodeIcons.table}Data</Node>
      <Node $kind="plain" $indent={1}>{nodeIcons.query}QueryFilter</Node>
      <Node $kind="widget">{nodeIcons.widget}gridadvanced-16</Node>
      <Node $kind="plain" $indent={1}>{nodeIcons.bolt}Filter</Node>
      <Node $kind="plain" $indent={2}>{nodeIcons.query}QueryFilter</Node>
    </Stack>
    <Wires width="974" height="299" viewBox="0 0 974 299" fill="none" aria-hidden="true">
      <g stroke="#3f97ee" strokeWidth="2">
        <path d="M278 89C320 80 336 42 376 33" />
        <path d="M278 153C320 138 334 68 376 58" />
        <path d="M589 112C638 103 644 73 680 64" />
        <path d="M589 138C628 130 648 137 690 129" />
      </g>
      <g fill="#3f97ee">
        <path d="m382 32-12-3 3 4-2 6Z" />
        <path d="m382 57-12-2 4 4-2 6Z" />
        <path d="m688 62-12-3 3 5-2 6Z" />
      </g>
    </Wires>
    <Stack $left={686} $top={20}>
      <ThingNode />
      <Node $kind="event" $pad>{nodeIcons.event}SelectedTag<Cut side="left" /></Node>
    </Stack>
    <Stack $left={686} $top={87} $gap={1}>
      <ThingNode />
      <Node $kind="plain" $indent={1}>{nodeIcons.query}query<Cut side="left" /></Node>
      <Node $kind="event">{nodeIcons.event}SelectedTag</Node>
    </Stack>
  </Diagram>
);

const green = "#eafbe4";

export default function App() {
  return (
    <Page>
      <GlobalStyle />
      <Nav>
        {navItems.map(([text, icon, active]) => (
          <NavLink key={text} href="#" $active={active}>{icon}{text}</NavLink>
        ))}
      </Nav>
      <Body>
        <Gutter $width={3} $align="flex-end"><Grip dir="left" /></Gutter>
        <Left>
          <TabRow $height={23}>
            <Tab $width={102} $shaded>Widgets</Tab>
            <Tab $width={102}>Explorer</Tab>
            <MoreTabs aria-label="More tabs"><ChevronIcon /></MoreTabs>
          </TabRow>
          <FilterRow $pad="6px 11px 5px 10px">
            <FilterBox>
              <FilterInput placeholder="Filter Explorer" aria-label="Filter Explorer" />
              <button aria-label="Clear filter"><ClearIcon /></button>
            </FilterBox>
          </FilterRow>
          <Tree>
            {treeItems.map(([guides, icon, text, selected], i) => (
              <TreeRow key={i}>
                {[...guides].map((g, n) => <Guide key={n} kind={g} label={text} />)}
                <TreeLabel href="#" $selected={selected}>{treeIcons[icon]}{text}</TreeLabel>
              </TreeRow>
            ))}
          </Tree>
          <Splitter $height={5}><SplitGrip><Dots /></SplitGrip></Splitter>
          <Props>
            <TabRow $height={22}><Tab $width={106}>Widget Properties</Tab></TabRow>
            <PropsHead>
              <PropsTitle>
                <PropsName>gridadvanced-16</PropsName>
                <SquareButton aria-label="Bindings"><BranchIcon /></SquareButton>
                <SquareButton aria-label="Configure"><GearIcon /></SquareButton>
                <SquareButton aria-label="Delete widget"><CloseIcon /></SquareButton>
              </PropsTitle>
              <FilterRow $pad="5px 10px 5px 10px">
                <FilterBox>
                  <FilterInput placeholder="Filter Properties" aria-label="Filter Properties" />
                  <button aria-label="Clear filter"><ClearIcon /></button>
                </FilterBox>
              </FilterRow>
            </PropsHead>
            <PropsBody>
              <PropTable>
                <colgroup><col width="149" /><col /></colgroup>
                <tbody>
                  <Prop name="Id" height={29}><PropText>gridadvanced-16</PropText></Prop>
                  <Prop name="Type" height={29}><PropText>Grid Advanced</PropText></Prop>
                  <Prop name="DisplayName" height={28} tint={green}><PropInput aria-label="DisplayName" defaultValue="gridadvanced-16" /></Prop>
                  <Prop name="Description" height={28}><PropInput aria-label="Description" /></Prop>
                  <Prop name="CustomClass" height={28} tint={green} extra={<SwapIcon />}><PropInput aria-label="CustomClass" /></Prop>
                  <Prop name="Data" height={23} icon={<TableIcon />} extra={<BackIcon />} />
                  <Prop name="IsEditable" height={24} tint="#d8ecfd" icon={<BoolIcon />} extra={<BackIcon />}><PropCheck type="checkbox" aria-label="IsEditable" /></Prop>
                </tbody>
              </PropTable>
              <VTrack>
                <ScrollButton aria-label="Scroll up"><Tri dir="up" color="#a3a3a3" /></ScrollButton>
                <VThumb $height={19} />
                <Spacer />
                <ScrollButton aria-label="Scroll down"><Tri dir="down" /></ScrollButton>
              </VTrack>
            </PropsBody>
          </Props>
        </Left>
        <Bar $width={3} />
        <Gutter $width={7}><Grip dir="left" /></Gutter>
        <Main>
          <Toolbar>
            {tools.map((group, i) => (
              <React.Fragment key={i}>
                {group.map(([label, icon]) => <ToolButton key={label} aria-label={label}>{icon}</ToolButton>)}
                <Separator />
              </React.Fragment>
            ))}
            <SplitButton aria-label="Layout">
              <SplitCell $grow={24}><LayoutIcon /></SplitCell>
              <SplitCell $grow={17} $line><Tri dir="down" w={11} h={7} color={ink} /></SplitCell>
            </SplitButton>
            <SplitButton aria-label="Language">
              <SplitCell $grow={24}><Translate>あ<TranslateA>A</TranslateA></Translate></SplitCell>
              <SplitCell $grow={17} $line><Tri dir="down" w={11} h={7} color={ink} /></SplitCell>
            </SplitButton>
            <WorkspaceLabel>
              Workspace
              <SelectWrap>
                <Select defaultValue="Custom"><option>Custom</option></Select>
                <Tri dir="down" w={6} h={6} />
              </SelectWrap>
            </WorkspaceLabel>
          </Toolbar>
          <Canvas>
            <HeaderWidget><HeaderIcon />PageHeader</HeaderWidget>
            <HScroll height={16} />
            <ResetPanel><ResetButton>Reset</ResetButton></ResetPanel>
            <GridWidget>
              <DataTable>
                <thead><tr>{columns.map((c) => <HeadCell key={c}>{c}</HeadCell>)}</tr></thead>
                <tbody>
                  {rows.map((r, i) => (
                    <DataRow key={i} $even={i % 2 === 1}>
                      {columns.map((c) => <DataCell key={c}>{r[c]}</DataCell>)}
                    </DataRow>
                  ))}
                </tbody>
              </DataTable>
              <GridSide>
                <GridSideHead />
                <VTrack $flex="1">
                  <ScrollButton aria-label="Scroll up"><Tri dir="up" color="#a3a3a3" /></ScrollButton>
                  <VThumb $height={17} />
                  <Spacer />
                  <ScrollButton aria-label="Scroll down"><Tri dir="down" /></ScrollButton>
                </VTrack>
              </GridSide>
            </GridWidget>
            <HScroll height={15} />
            <BoundNotice>
              tw.grid-advanced-ide.must-be-bound-to-data
              <WidgetMenu aria-label="Widget menu"><Tri dir="down" w={8} h={5} /></WidgetMenu>
            </BoundNotice>
          </Canvas>
          <Splitter $height={4}><SplitGrip><Dots /></SplitGrip></Splitter>
          <BottomTabs>
            <BottomTab>Connections</BottomTab>
            <BottomTab $shaded><NoteIcon />To-Do</BottomTab>
          </BottomTabs>
          <Connections />
        </Main>
        <Gutter $width={7}><Grip dir="right" /></Gutter>
        <Bar $width={2} />
      </Body>
    </Page>
  );
}
